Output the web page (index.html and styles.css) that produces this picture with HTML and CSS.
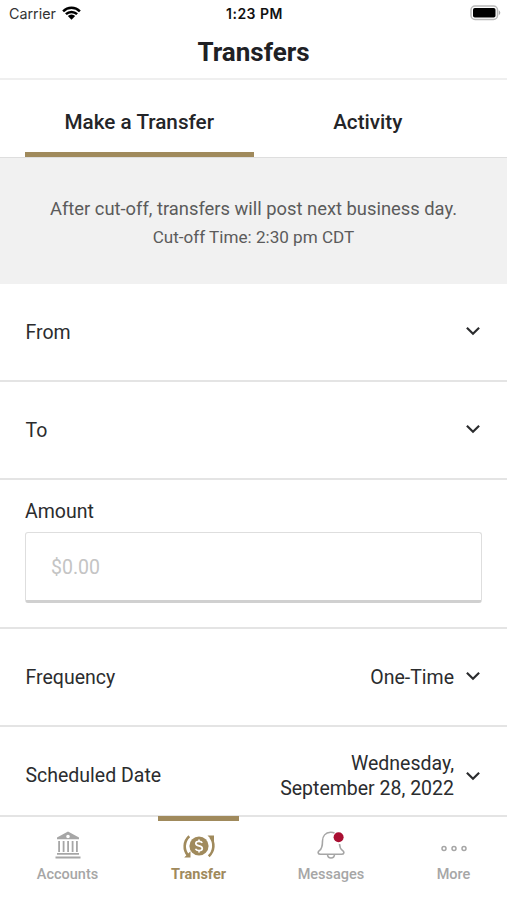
FILE: index.html
```html
<!DOCTYPE html>
<html lang="en">
<head>
<meta charset="utf-8">
<title>Transfers</title>
<link rel="stylesheet" href="styles.css">
</head>
<body>
<div class="app">
  <div class="status">
    <div class="carrier"><span>Carrier</span>
      <svg width="19" height="14" viewBox="0 0 19 14"><path d="M1.1 5.3A12 12 0 0 1 17.9 5.3M3.9 8.2A8 8 0 0 1 15.1 8.2" fill="none" stroke="#000" stroke-width="2.5"/><path d="M5.8 10.1a5.3 5.3 0 0 1 7.4 0L9.5 13.8z"/></svg>
    </div>
    <div class="clock">1:23 PM</div>
    <svg class="battery" width="31" height="16" viewBox="0 0 31 16"><rect x="1" y="1" width="26.5" height="13.5" rx="4" fill="#fff" stroke="#b9b9b9" stroke-width="1.5"/><rect x="3" y="3" width="22.5" height="9.5" rx="1.8"/><path d="M28.8 5.3q3 2.5 0 5z" fill="#aaa"/></svg>
  </div>
  <header class="header"><h1>Transfers</h1></header>
  <nav class="tabs">
    <a class="tab active">Make a Transfer</a>
    <a class="tab">Activity</a>
  </nav>
  <section class="notice">
    <p class="notice-main">After cut-off, transfers will post next business day.</p>
    <p class="notice-time">Cut-off Time: 2:30 pm CDT</p>
  </section>
  <main>
    <div class="row"><span class="label">From</span>
      <svg class="chevron" width="16" height="10" viewBox="0 0 16 10"><path d="M1.9 1.8 8 7.7 14.1 1.8"/></svg></div>
    <div class="row"><span class="label">To</span>
      <svg class="chevron" width="16" height="10" viewBox="0 0 16 10"><path d="M1.9 1.8 8 7.7 14.1 1.8"/></svg></div>
    <div class="amount"><label class="label" for="amount">Amount</label>
      <input id="amount" class="field" type="text" placeholder="$0.00"></div>
    <div class="row frequency"><span class="label">Frequency</span><span class="value">One-Time</span>
      <svg class="chevron" width="16" height="10" viewBox="0 0 16 10"><path d="M1.9 1.8 8 7.7 14.1 1.8"/></svg></div>
    <div class="row date"><span class="label">Scheduled Date</span><span class="value">Wednesday,<br>September 28, 2022</span>
      <svg class="chevron" width="16" height="10" viewBox="0 0 16 10"><path d="M1.9 1.8 8 7.7 14.1 1.8"/></svg></div>
  </main>
  <nav class="bottom">
    <a class="item accounts">
      <svg width="28" height="30" viewBox="0 0 28 30" fill="#a6a6a6"><path fill-rule="evenodd" d="M14 1.5 25 7.4V9.2H3V7.4zM14 4.7a1.8 1.8 0 1 0 0 3.6 1.8 1.8 0 0 0 0-3.6z"/><path d="M4.2 11h1.800v11h-1.800zM8.700 11h1.800v11h-1.800zM13.200 11h1.800v11h-1.800zM17.700 11h1.800v11h-1.800zM22 11h1.800v11h-1.800zM3 23h22v1.700h-22zM1.500 26.500h25v1.900h-25z"/></svg>
      <span>Accounts</span></a>
    <a class="item transfer">
      <svg width="34" height="30" viewBox="0 0 34 30"><circle cx="17" cy="16" r="9.600" fill="#a08a5c"/><g fill="none" stroke="#a08a5c" stroke-width="2.600"><path d="M7.300 6.300C1.500 11.500 1.300 20 6 25.300M26.700 26.300C32.500 21 32.700 12.500 28.500 7.200"/></g><path d="M25.500 5.500h6.500v6.500zM8.500 21.200v6.300H2.200z" fill="#a08a5c"/><path d="M20.200 12.900c-.6-1.300-1.800-1.600-3.200-1.600-2 0-3.200.8-3.200 2.200 0 3.200 6.500 1.500 6.500 4.700 0 1.600-1.300 2.400-3.300 2.400-1.700 0-3-.6-3.500-1.900M17 9.600v1.700M17 20.600v1.900" fill="none" stroke="#fff" stroke-width="1.700"/></svg>
      <span>Transfer</span></a>
    <a class="item messages">
      <svg width="28" height="30" viewBox="0 0 28 30"><path d="M10.500 24.500c.3 4.700 6.700 4.700 7 0M17.500 3.200q-1.500-1.100-4-1C8.500 2.500 5.500 6.200 5.500 11c0 5.500-.7 7.800-2.900 9.400C.2 22 1 24.300 3.500 24.300h21c2.500 0 3.300-2.300.9-3.900-1.900-1.300-2.700-3.300-2.900-6.400" fill="none" stroke="#a6a6a6" stroke-width="1.600"/><circle cx="21.600" cy="7.200" r="5" fill="#a90f32"/></svg>
      <span>Messages</span></a>
    <a class="item more">
      <svg width="28" height="30" viewBox="0 0 28 30" fill="none" stroke="#a6a6a6" stroke-width="1.500"><circle cx="4" cy="18.500" r="2"/><circle cx="14" cy="18.500" r="2"/><circle cx="24" cy="18.500" r="2"/></svg>
      <span>More</span></a>
  </nav>
</div>
</body>
</html>
```
FILE: styles.css
```css
* { box-sizing: border-box; }
body { margin: 0; background: #fff; color: #2b2c2e; font-family: Roboto, "Liberation Sans", sans-serif; }
h1, p { margin: 0; }
.app { width: 507px; height: 900px; overflow: hidden; display: flex; flex-direction: column; }
.status { height: 28px; flex: none; display: grid; grid-template-columns: 1fr auto 1fr; align-items: center; padding: 0 6px 0 9px; color: #111; font-family: Inter, sans-serif; font-size: 14px; }
.carrier { display: flex; align-items: center; gap: 6px; color: #333; font-size: 14.3px; margin-top: -2px; }
.carrier svg { margin-bottom: 1px; }
.clock { font-weight: 600; font-size: 14px; letter-spacing: .5px; margin: -2px 1px 0 0; }
.battery { justify-self: end; margin-bottom: 2px; }
.header { height: 52px; flex: none; border-bottom: 2px solid #efefef; display: flex; justify-content: center; }
h1 { font-size: 26px; line-height: 48px; font-weight: 700; color: #202124; }
.tabs { height: 78px; flex: none; display: flex; padding: 0 25px; border-bottom: 1px solid #dedede; }
.tab { flex: 1; display: flex; align-items: center; justify-content: center; padding-top: 12px; border-bottom: 5px solid transparent; font-size: 20.7px; font-weight: 500; color: #242528; }
.tab.active { border-bottom-color: #a08a5c; }
.notice { height: 126px; flex: none; background: #f1f1f1; color: #5b5b5b; text-align: center; padding-top: 37px; }
.notice-main { font-size: 18.35px; line-height: 28px; }
.notice-time { font-size: 17.1px; line-height: 28px; }
.row { height: 98px; display: flex; align-items: center; padding: 1px 26px 0 25.5px; border-bottom: 2px solid #e4e4e4; font-size: 19.5px; line-height: 25px; }
.label { margin-right: auto; font-size: 19.5px; line-height: 25px; }
.value { text-align: right; margin-right: 11px; }
.chevron { fill: none; stroke: #2b2c2e; stroke-width: 2.2; margin-bottom: 3px; }
.amount { height: 149px; padding: 19px 25px 0; border-bottom: 2px solid #e4e4e4; }
.amount .label { display: block; }
.field { display: block; width: 100%; height: 71px; margin-top: 8px; padding: 2px 25px 0; border: 1.5px solid #dedede; border-bottom: 3px solid #d0d0d0; border-radius: 3px; background: #fff; font: 19.5px Roboto, sans-serif; outline: 0; }
.field::placeholder { color: #c4c4c4; opacity: 1; }
.frequency { padding-top: 0; }
.date { height: 88px; padding-top: 9px; border: 0; }
.date .chevron { margin-bottom: 0; }
.bottom { height: 85px; flex: none; display: flex; border-top: 2px solid #e4e4e4; color: #a6a6a6; font-size: 14.5px; font-weight: 500; }
.item { display: flex; flex-direction: column; align-items: center; padding-top: 13px; }
.item span { margin-top: 6px; line-height: 18px; }
.accounts { width: 135px; }
.transfer { width: 127px; color: #a08a5c; font-weight: 700; position: relative; }
.transfer::before { content: ""; position: absolute; top: -1px; left: 23px; width: 81px; height: 5px; background: #a08a5c; }
.messages { width: 138px; }
.more { width: 107px; }
```
